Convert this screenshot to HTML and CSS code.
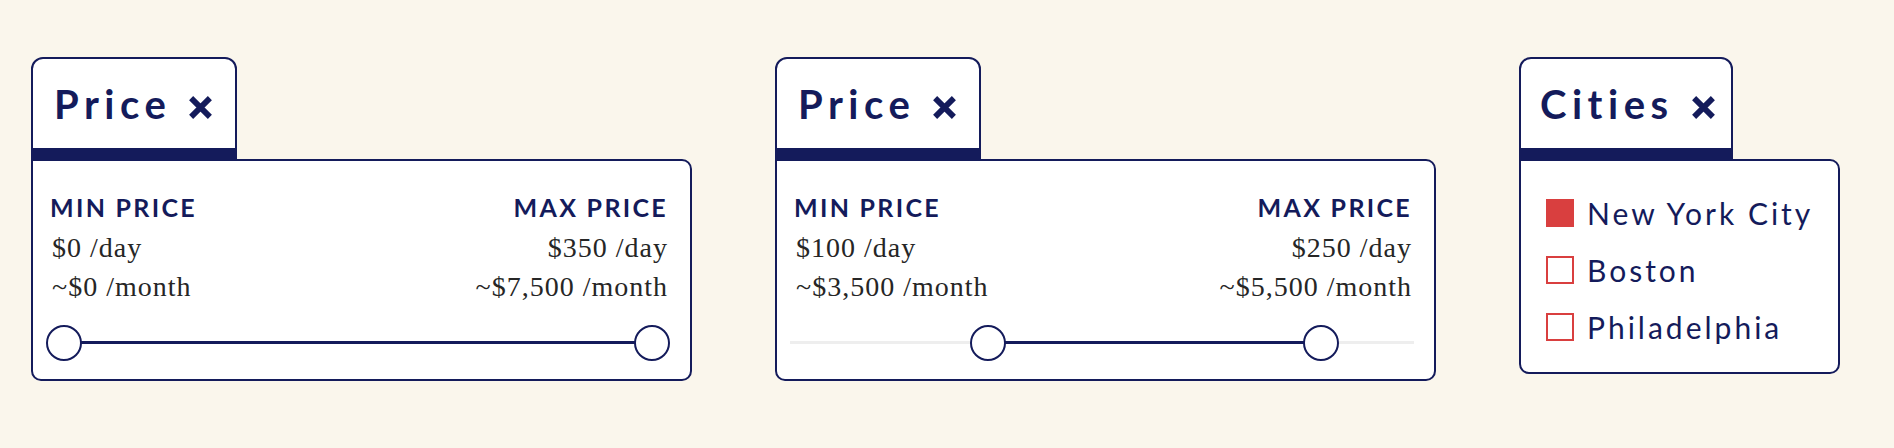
FILE: index.html
```html
<!DOCTYPE html>
<html lang="en">

<head>
  <meta charset="UTF-8">
  <meta name="viewport" content="width=device-width, initial-scale=1.0">
  <title>Filters</title>
  <link rel="stylesheet" href="styles.css">
</head>

<body>
  <div class="filters">

    <div class="filter">
      <div class="filter-tab">
        <span class="filter-title">Price</span>
        <svg class="close" viewBox="0 0 24 24" width="25" height="25"><path d="M3 3 L21 21 M21 3 L3 21" /></svg>
      </div>
      <div class="filter-panel price-panel">
        <div class="price-cols">
          <div class="price-col">
            <div class="price-label">MIN PRICE</div>
            <div class="price-value">$0 /day</div>
            <div class="price-value">~$0 /month</div>
          </div>
          <div class="price-col price-col-max">
            <div class="price-label">MAX PRICE</div>
            <div class="price-value">$350 /day</div>
            <div class="price-value">~$7,500 /month</div>
          </div>
        </div>
        <div class="range" style="--from: 0; --to: 1;">
          <div class="range-track"></div>
          <div class="range-fill"></div>
          <span class="range-thumb thumb-from"></span>
          <span class="range-thumb thumb-to"></span>
        </div>
      </div>
    </div>

    <div class="filter">
      <div class="filter-tab">
        <span class="filter-title">Price</span>
        <svg class="close" viewBox="0 0 24 24" width="25" height="25"><path d="M3 3 L21 21 M21 3 L3 21" /></svg>
      </div>
      <div class="filter-panel price-panel">
        <div class="price-cols">
          <div class="price-col">
            <div class="price-label">MIN PRICE</div>
            <div class="price-value">$100 /day</div>
            <div class="price-value">~$3,500 /month</div>
          </div>
          <div class="price-col price-col-max">
            <div class="price-label">MAX PRICE</div>
            <div class="price-value">$250 /day</div>
            <div class="price-value">~$5,500 /month</div>
          </div>
        </div>
        <div class="range" style="--from: 0.306; --to: 0.872;">
          <div class="range-track"></div>
          <div class="range-fill"></div>
          <span class="range-thumb thumb-from"></span>
          <span class="range-thumb thumb-to"></span>
        </div>
      </div>
    </div>

    <div class="filter">
      <div class="filter-tab tab-cities">
        <span class="filter-title">Cities</span>
        <svg class="close" viewBox="0 0 24 24" width="25" height="25"><path d="M3 3 L21 21 M21 3 L3 21" /></svg>
      </div>
      <div class="filter-panel city-panel">
        <label class="city">
          <span class="checkbox checked"></span>
          New York City
        </label>
        <label class="city">
          <span class="checkbox"></span>
          Boston
        </label>
        <label class="city">
          <span class="checkbox"></span>
          Philadelphia
        </label>
      </div>
    </div>

  </div>
</body>

</html>
```

FILE: styles.css
```css
body {
  margin: 0;
  padding: 57px 0 0 31px;
  background-color: #faf6ec;
  font-family: 'Lato', 'Open Sans', sans-serif;
  color: #141b5b;
}

.filters {
  display: flex;
  align-items: flex-start;
  gap: 83px;
}

.filter {
  display: flex;
  flex-direction: column;
  align-items: flex-start;
}

/* tab on top of the panel */
.filter-tab {
  position: relative;
  z-index: 1;
  display: flex;
  align-items: center;
  height: 89px;
  padding: 0 22px 0 21px;
  background-color: #ffffff;
  border: 2px solid #141b5b;
  border-bottom: 12px solid #141b5b;
  border-radius: 12px 12px 0 0;
}

.tab-cities {
  padding: 0 15px 0 19px;
}

.filter-title {
  font-size: 40px;
  font-weight: 700;
  letter-spacing: 5.5px;
}

.close {
  margin: 7px 0 0 17px;
  width: 25px;
  height: 25px;
  fill: none;
  stroke: #141b5b;
  stroke-width: 5.5;
}

.filter-panel {
  margin-top: -1px;
  background-color: #ffffff;
  border: 2px solid #141b5b;
  border-radius: 0 10px 10px 10px;
  box-sizing: border-box;
}

.price-panel {
  width: 661px;
  height: 222px;
  padding: 31px 22px 0 17px;
}

.price-cols {
  display: flex;
  justify-content: space-between;
}

.price-col-max {
  text-align: right;
}

.price-label {
  font-size: 25px;
  line-height: 30px;
  font-weight: 700;
  letter-spacing: 2.3px;
  margin-bottom: 6px;
}

.price-value {
  padding-left: 2px;
  font-family: 'Liberation Serif', serif;
  font-size: 28px;
  line-height: 39px;
  letter-spacing: 1px;
  color: #262626;
}

.range {
  position: relative;
  height: 36px;
  margin: 19px -2px 0 -4px;
}

.range-track,
.range-fill {
  position: absolute;
  top: 16px;
  height: 3px;
}

.range-track {
  left: 0;
  right: 0;
  background-color: #eeeeee;
}

.range-fill {
  left: calc(18px + var(--from) * (100% - 36px));
  right: calc(18px + (1 - var(--to)) * (100% - 36px));
  background-color: #141b5b;
}

.range-thumb {
  position: absolute;
  top: 0;
  width: 36px;
  height: 36px;
  box-sizing: border-box;
  border: 2.5px solid #141b5b;
  border-radius: 50%;
  background-color: #ffffff;
}

.thumb-from {
  left: calc(var(--from) * (100% - 36px));
}

.thumb-to {
  left: calc(var(--to) * (100% - 36px));
}

.city-panel {
  display: flex;
  flex-direction: column;
  gap: 29px;
  padding: 38px 25px 31px 25px;
}

.city {
  display: flex;
  align-items: center;
  gap: 13px;
  font-size: 30px;
  line-height: 28px;
  letter-spacing: 3px;
}

.checkbox {
  width: 28px;
  height: 28px;
  box-sizing: border-box;
  border: 2px solid #d93f3f;
}

.checkbox.checked {
  background-color: #d93f3f;
}
```
